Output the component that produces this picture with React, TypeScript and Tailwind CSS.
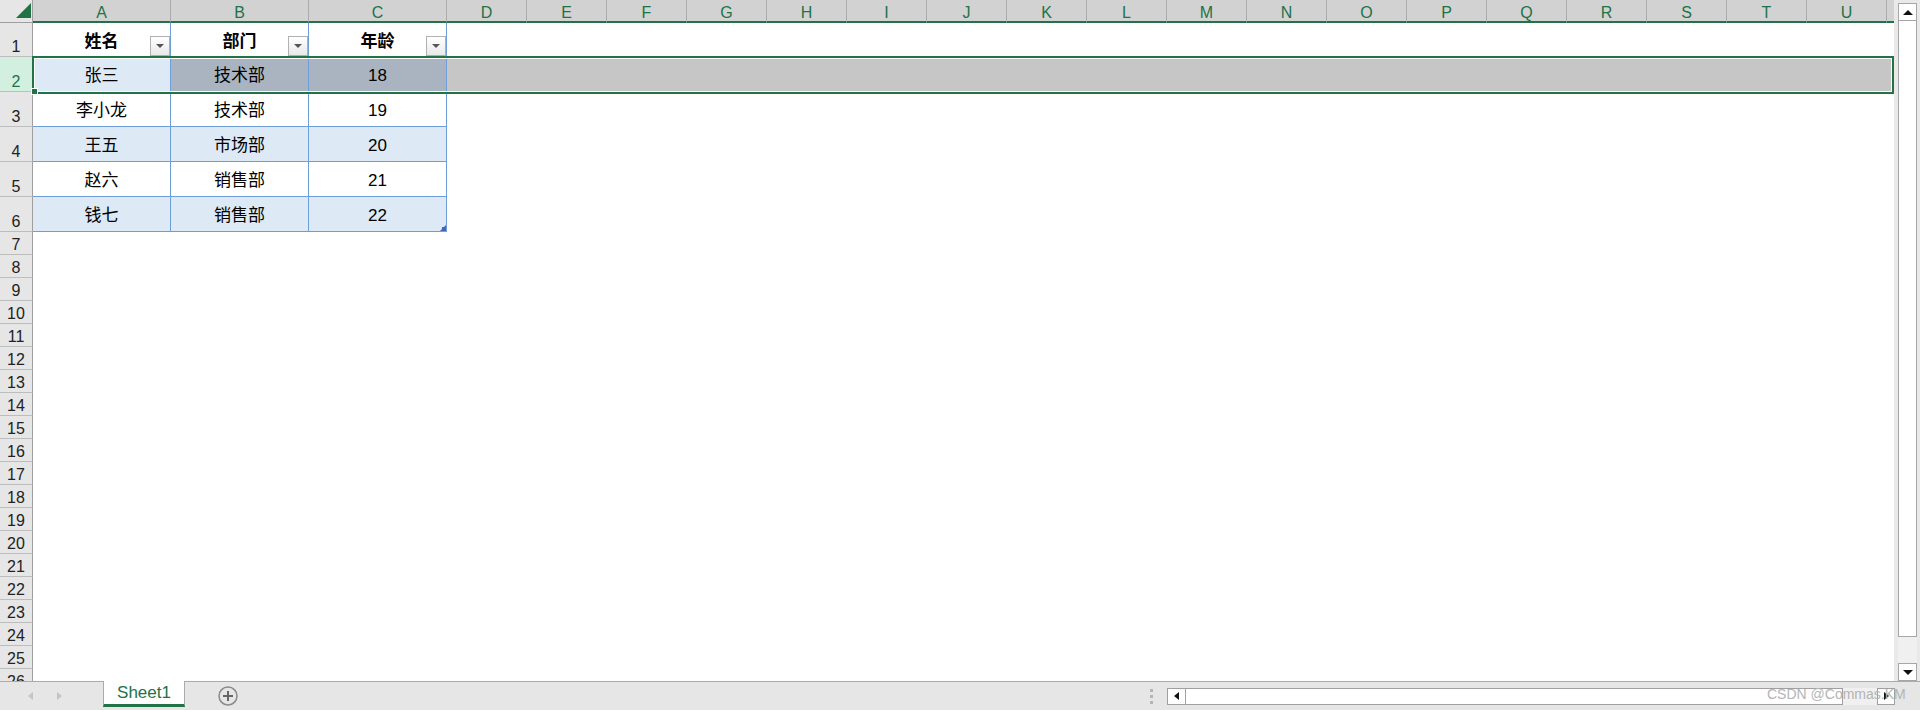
import React from "react";

const GREEN = "#217346";

const wideCols = ["D", "E", "F", "G", "H", "I", "J", "K", "L", "M", "N", "O", "P", "Q", "R", "S", "T", "U"];

const people = [
  { name: "张三", dept: "技术部", age: "18" },
  { name: "李小龙", dept: "技术部", age: "19" },
  { name: "王五", dept: "市场部", age: "20" },
  { name: "赵六", dept: "销售部", age: "21" },
  { name: "钱七", dept: "销售部", age: "22" },
];

// rows 7..26 are empty
const emptyRows = Array.from({ length: 20 }, (_, i) => i + 7);

function ColHead({ label, wide }: { label: string; wide?: boolean }) {
  return (
    <div
      className={`flex shrink-0 items-end justify-center border-r border-b-2 border-r-[#ababab] border-b-[#217346] bg-[#d2d2d2] text-[16px] leading-[16px] text-[#217346] ${
        wide ? "w-[80px]" : "w-[138px]"
      }`}
    >
      {label}
    </div>
  );
}

function RowHead({ n, active }: { n: number; active?: boolean }) {
  return (
    <div
      className={`flex w-[33px] shrink-0 items-end justify-center border-r border-b border-r-[#9e9e9e] border-b-[#bdbdbd] text-[16px] leading-[18px] ${
        active ? "bg-[#d3efdf] text-[#217346]" : "bg-[#e6e6e6] text-[#222]"
      }`}
    >
      {n}
    </div>
  );
}

function FilterButton() {
  return (
    <div className="absolute right-0 bottom-[1px] flex h-[20px] w-[20px] items-center justify-center border border-[#b0b0b0] bg-linear-to-b from-white to-[#e9e9e9]">
      <svg width="8" height="4" viewBox="0 0 8 4">
        <polygon points="0,0 8,0 4,4" fill="#555" />
      </svg>
    </div>
  );
}

function Arrow({ dir, color = "#111" }: { dir: "up" | "down" | "left" | "right"; color?: string }) {
  if (dir === "up")
    return (
      <svg width="10" height="5" viewBox="0 0 10 5">
        <polygon points="0,5 10,5 5,0" fill={color} />
      </svg>
    );
  if (dir === "down")
    return (
      <svg width="10" height="5" viewBox="0 0 10 5">
        <polygon points="0,0 10,0 5,5" fill={color} />
      </svg>
    );
  if (dir === "left")
    return (
      <svg width="5" height="8" viewBox="0 0 5 8">
        <polygon points="5,0 5,8 0,4" fill={color} />
      </svg>
    );
  return (
    <svg width="5" height="8" viewBox="0 0 5 8">
      <polygon points="0,0 0,8 5,4" fill={color} />
    </svg>
  );
}

export default function App() {
  return (
    <div className="relative flex h-[710px] w-[1920px] flex-col overflow-hidden bg-white font-['Liberation_Sans','Noto_Sans_CJK_SC',sans-serif] text-black">
      <div className="flex h-[681px] shrink-0">
        {/* sheet grid */}
        <div className="relative flex w-[1894px] shrink-0 flex-col overflow-hidden">
          {/* column headers */}
          <div className="flex h-[23px] shrink-0">
            <div className="relative w-[33px] shrink-0 border-r border-b border-[#9e9e9e] bg-[#e6e6e6]">
              <svg className="absolute inset-0" width="33" height="23">
                <polygon points="31,3 31,18 16,18" fill={GREEN} />
              </svg>
            </div>
            {["A", "B", "C"].map((c) => (
              <ColHead key={c} label={c} />
            ))}
            {wideCols.map((c) => (
              <ColHead key={c} label={c} wide />
            ))}
            <div className="flex-1 border-b-2 border-[#217346] bg-[#d2d2d2]" />
          </div>

          {/* row 1: table header */}
          <div className="flex h-[34px] shrink-0">
            <RowHead n={1} />
            {["姓名", "部门", "年龄"].map((t) => (
              <div
                key={t}
                className="relative flex w-[138px] shrink-0 items-center justify-center border-r border-[#6d9eda] pt-1 text-[17px] font-bold"
              >
                {t}
                <FilterButton />
              </div>
            ))}
            <div className="flex-1" />
          </div>

          {/* data rows */}
          {people.map((p, i) => {
            const rowNo = i + 2;
            const selected = rowNo === 2;
            const banded = i % 2 === 0;
            const base = "flex w-[138px] shrink-0 items-center justify-center border-r border-b border-[#6d9eda] pt-1 text-[17px]";
            const shade = selected ? "bg-[#aab4c0]" : banded ? "bg-[#dde9f5]" : "bg-white";
            return (
              <div key={rowNo} className="flex h-[35px] shrink-0">
                <RowHead n={rowNo} active={selected} />
                <div className={`${base} ${banded ? "bg-[#dde9f5]" : "bg-white"}`}>{p.name}</div>
                <div className={`${base} ${shade}`}>{p.dept}</div>
                <div className={`relative ${base} ${shade}`}>
                  {p.age}
                  {rowNo === 6 && (
                    <svg className="absolute right-0 bottom-0" width="6" height="6" viewBox="0 0 6 6">
                      <polygon points="6,0 6,6 0,6" fill="#4466c0" />
                      <rect x="2" y="2" width="4" height="4" fill="#4466c0" />
                    </svg>
                  )}
                </div>
                <div className={`flex-1 ${selected ? "bg-[#c6c6c6]" : "bg-white"}`} />
              </div>
            );
          })}

          {emptyRows.map((n) => (
            <div key={n} className="flex h-[23px] shrink-0">
              <RowHead n={n} />
              <div className="flex-1" />
            </div>
          ))}

          {/* selection of row 2 */}
          <div className="pointer-events-none absolute top-[56px] left-[32px] h-[38px] w-[1862px] border-2 border-[#217346] shadow-[inset_0_0_0_1px_#ffffff]" />
          <div className="absolute top-[88px] left-[31px] h-[7px] w-[7px] border border-white bg-[#217346]" />
        </div>

        {/* vertical scrollbar */}
        <div className="flex w-[26px] shrink-0 flex-col bg-[#e9e9e9] pt-[3px] pr-[3px] pl-[4px]">
          <div className="flex h-[18px] shrink-0 items-center justify-center border border-[#a6a6a6] bg-white">
            <Arrow dir="up" />
          </div>
          <div className="h-[616px] shrink-0 border-x border-b border-[#a6a6a6] bg-white" />
          <div className="flex-1 bg-[#f0f0f0]" />
          <div className="flex h-[18px] shrink-0 items-center justify-center border border-[#a6a6a6] bg-white">
            <Arrow dir="down" />
          </div>
        </div>
      </div>

      {/* sheet tabs + horizontal scrollbar */}
      <div className="flex h-[29px] shrink-0 items-center border-t border-[#ababab] bg-[#e6e6e6]">
        <div className="flex w-[103px] shrink-0 items-center gap-[24px] pl-[28px]">
          <Arrow dir="left" color="#c4c4c4" />
          <Arrow dir="right" color="#c4c4c4" />
        </div>
        <div className="-mt-px flex h-[26px] w-[82px] shrink-0 items-center justify-center self-start border-x border-b-[3px] border-x-[#ababab] border-b-[#217346] bg-white text-[17px] leading-[20px] text-[#217346]">
          Sheet1
        </div>
        <div className="ml-[33px] flex h-[20px] w-[20px] shrink-0 items-center justify-center">
          <svg width="20" height="20" viewBox="0 0 20 20">
            <circle cx="10" cy="10" r="9" fill="none" stroke="#8a8a8a" strokeWidth="1.5" />
            <path d="M10 5 V15 M5 10 H15" stroke="#666" strokeWidth="2" />
          </svg>
        </div>

        <div className="mr-[25px] ml-auto flex items-center">
          <div className="flex flex-col gap-[3px]">
            <div className="h-[3px] w-[3px] bg-[#b5b5b5]" />
            <div className="h-[3px] w-[3px] bg-[#b5b5b5]" />
            <div className="h-[3px] w-[3px] bg-[#b5b5b5]" />
          </div>
          <div className="ml-[14px] flex h-[17px] w-[19px] items-center justify-center border border-[#a0a0a0] bg-white">
            <Arrow dir="left" />
          </div>
          <div className="h-[17px] w-[657px] border-y border-r border-[#a0a0a0] bg-white" />
          <div className="h-[17px] w-[34px] bg-[#f0f0f0]" />
          <div className="flex h-[17px] w-[18px] items-center justify-center border border-[#a0a0a0] bg-white">
            <Arrow dir="right" />
          </div>
        </div>
      </div>

      {/* watermark */}
      <div className="pointer-events-none absolute top-[687px] left-[1767px] text-[14px] leading-[14px] text-[#b4b4b4]">
        CSDN @Commas.KM
      </div>
    </div>
  );
}
